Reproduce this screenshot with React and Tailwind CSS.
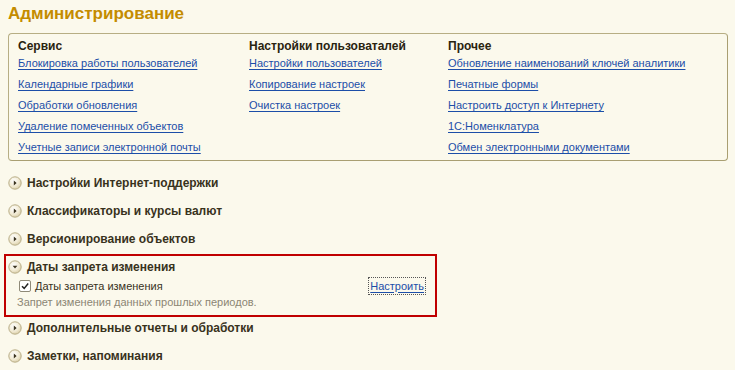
import React from "react";

function Toggle({ open }) {
  return (
    <svg width="14" height="14" viewBox="0 0 14 14" className="shrink-0">
      <defs>
        <radialGradient id={open ? "tg-open" : "tg-closed"} cx="40%" cy="35%" r="70%">
          <stop offset="0%" stopColor="#ffffff" />
          <stop offset="60%" stopColor="#f1ead3" />
          <stop offset="100%" stopColor="#d8cca6" />
        </radialGradient>
      </defs>
      <circle cx="7" cy="7" r="6.2" fill={`url(#${open ? "tg-open" : "tg-closed"})`} stroke="#b9ae88" strokeWidth="1" />
      {open ? (
        <path d="M4.6 5.8 L9.4 5.8 L7 8.6 Z" fill="#3a3320" />
      ) : (
        <path d="M5.8 4.6 L8.6 7 L5.8 9.4 Z" fill="#3a3320" />
      )}
    </svg>
  );
}

const columns = [
  {
    title: "Сервис",
    width: "w-[231px]",
    links: [
      "Блокировка работы пользователей",
      "Календарные графики",
      "Обработки обновления",
      "Удаление помеченных объектов",
      "Учетные записи электронной почты",
    ],
  },
  {
    title: "Настройки пользоваталей",
    width: "w-[199px]",
    links: ["Настройки пользователей", "Копирование настроек", "Очистка настроек"],
  },
  {
    title: "Прочее",
    width: "flex-1",
    links: [
      "Обновление наименований ключей аналитики",
      "Печатные формы",
      "Настроить доступ к Интернету",
      "1С:Номенклатура",
      "Обмен электронными документами",
    ],
  },
];

function SectionRow({ label, className = "h-[28px]" }) {
  return (
    <div className={`flex items-center gap-[5px] pl-[8px] ${className}`}>
      <Toggle open={false} />
      <span className="text-[12px] font-bold text-[#38321c]">{label}</span>
    </div>
  );
}

export default function App() {
  return (
    <div
      className="w-[735px] h-[370px] overflow-hidden bg-[#fbf9ec]"
      style={{ fontFamily: '"Liberation Sans", Arial, sans-serif' }}
    >
      {/* TITLE */}
      <div className="pl-[8px] pt-[2px] h-[26px] leading-[24px] text-[17px] font-bold text-[#c48c00]">
        Администрирование
      </div>

      {/* LINKS PANEL */}
      <div className="mx-[8px] mt-[7px] w-[720px] h-[128px] rounded-[4px] border border-[#b7ae84] border-b-[#a99f72] border-r-[#a99f72] pt-[5px] pl-[9px] flex">
        {columns.map((col) => (
          <div key={col.title} className={`${col.width} flex flex-col`}>
            <div className="h-[14px] leading-[14px] text-[12px] font-bold text-[#2a2410]">{col.title}</div>
            {col.links.map((l) => (
              <div key={l} className="h-[21px] flex items-center">
                <a className="text-[11px] text-[#1c4ea8] underline underline-offset-[2px] cursor-pointer">{l}</a>
              </div>
            ))}
          </div>
        ))}
      </div>

      {/* SECTIONS */}
      <div className="mt-[8px]">
        <SectionRow label="Настройки Интернет-поддержки" />
        <SectionRow label="Классификаторы и курсы валют" />
        <SectionRow label="Версионирование объектов" />

        <div className="ml-[4px] mt-[1px] w-[433px] border-2 border-[#c00000] pb-[5px]">
          <div className="flex items-center gap-[5px] pl-[2px] h-[22px]">
            <Toggle open />
            <span className="text-[12px] font-bold text-[#38321c]">Даты запрета изменения</span>
          </div>
          <div className="flex items-center h-[16px] pl-[13px] pr-[10px]">
            <span className="w-[12px] h-[12px] rounded-[2px] border border-[#8f8a78] bg-white flex items-center justify-center">
              <svg width="10" height="10" viewBox="0 0 10 10">
                <path d="M2 5.2 L4.2 7.4 L8.2 2.6" fill="none" stroke="#222" strokeWidth="1.5" />
              </svg>
            </span>
            <span className="ml-[4px] text-[11px] text-[#38321c]">Даты запрета изменения</span>
            <a className="ml-auto text-[11px] text-[#1c4ea8] underline underline-offset-[2px] outline-1 outline-dotted outline-[#555] px-[1px]">
              Настроить
            </a>
          </div>
          <div className="h-[16px] flex items-center pl-[11px] text-[11px] text-[#8c8674]">
            Запрет изменения данных прошлых периодов.
          </div>
        </div>

        <SectionRow label="Дополнительные отчеты и обработки" className="h-[22px]" />
        <SectionRow label="Заметки, напоминания" className="h-[22px] mt-[6px]" />
      </div>
    </div>
  );
}
